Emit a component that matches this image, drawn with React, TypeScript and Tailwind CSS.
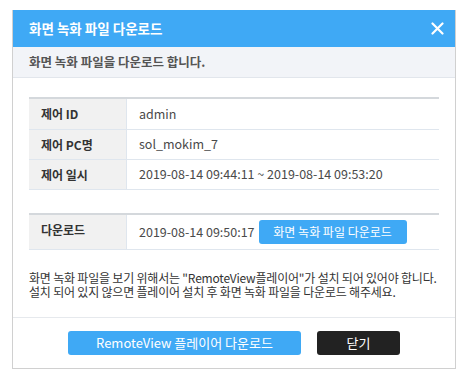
const font = { fontFamily: '"Noto Sans CJK KR", "Noto Sans", sans-serif' };

const InfoRow = ({ label, value, h }: { label: string; value: React.ReactNode; h: string }) => (
  <div className={`flex border-b border-[#dfe6ee] ${h}`}>
    <div className="w-[98px] shrink-0 bg-[#f1f1f1] border-r border-[#dfe6ee] pl-3 pt-[6px] text-[12px] font-bold text-[#333]">
      {label}
    </div>
    <div className="flex-1 flex items-center pl-3 text-[12.5px] text-[#4a4a4a]">{value}</div>
  </div>
);

export default function App() {
  return (
    <div className="w-[466px] h-[373px] bg-white pt-[10px] pl-[12px]" style={font}>
      <div className="w-[444px] h-[359px] border border-[#d0d0d0] border-t-0 flex flex-col bg-white">
        {/* Header */}
        <div className="h-[37px] bg-[#3fa9f5] flex items-center justify-between pl-[16px] pr-[11px]">
          <span className="text-white font-bold text-[13.5px]">화면 녹화 파일 다운로드</span>
          <svg width="13" height="13" viewBox="0 0 13 13">
            <path d="M1.5 1.5 L11.5 11.5 M11.5 1.5 L1.5 11.5" stroke="white" strokeWidth="2.2" strokeLinecap="round" />
          </svg>
        </div>
        <div className="h-[31px] bg-[#f2f4f8] border-b border-[#e2e6ec] flex items-center pl-[16px] text-[12.5px] font-bold text-[#555]">
          화면 녹화 파일을 다운로드 합니다.
        </div>

        {/* Body */}
        <div className="flex-1 px-[16px] pt-[19px]">
          <div className="border-t-2 border-[#d4d8dc]">
            <InfoRow label="제어 ID" value="admin" h="h-[31px]" />
            <InfoRow label="제어 PC명" value="sol_mokim_7" h="h-[30px]" />
            <InfoRow label="제어 일시" value="2019-08-14 09:44:11 ~ 2019-08-14 09:53:20" h="h-[30px]" />
          </div>

          <div className="mt-[23px] border-t-2 border-[#d4d8dc]">
            <InfoRow
              label="다운로드"
              h="h-[35px]"
              value={
                <div className="flex items-center gap-[4px]">
                  <span>2019-08-14 09:50:17</span>
                  <button className="w-[148px] h-[24px] rounded-[3px] bg-[#3fa9f5] text-white text-[12px]">
                    화면 녹화 파일 다운로드
                  </button>
                </div>
              }
            />
          </div>

          <p className="mt-[21px] text-[12px] leading-[14px] text-[#333] tracking-[-0.2px]">
            화면 녹화 파일을 보기 위해서는 "RemoteView플레이어"가 설치 되어 있어야 합니다.
            <br />
            설치 되어 있지 않으면 플레이어 설치 후 화면 녹화 파일을 다운로드 해주세요.
          </p>
        </div>

        {/* Footer */}
        <div className="h-[51px] border-t border-[#e6e9ed] flex items-start justify-center gap-[16px] pt-[13px]">
          <button className="w-[233px] h-[24px] rounded-[3px] bg-[#3fa9f5] text-white text-[13px]">
            RemoteView 플레이어 다운로드
          </button>
          <button className="w-[83px] h-[24px] rounded-[3px] bg-[#222] text-white text-[13px]">
            닫기
          </button>
        </div>
      </div>
    </div>
  );
}
